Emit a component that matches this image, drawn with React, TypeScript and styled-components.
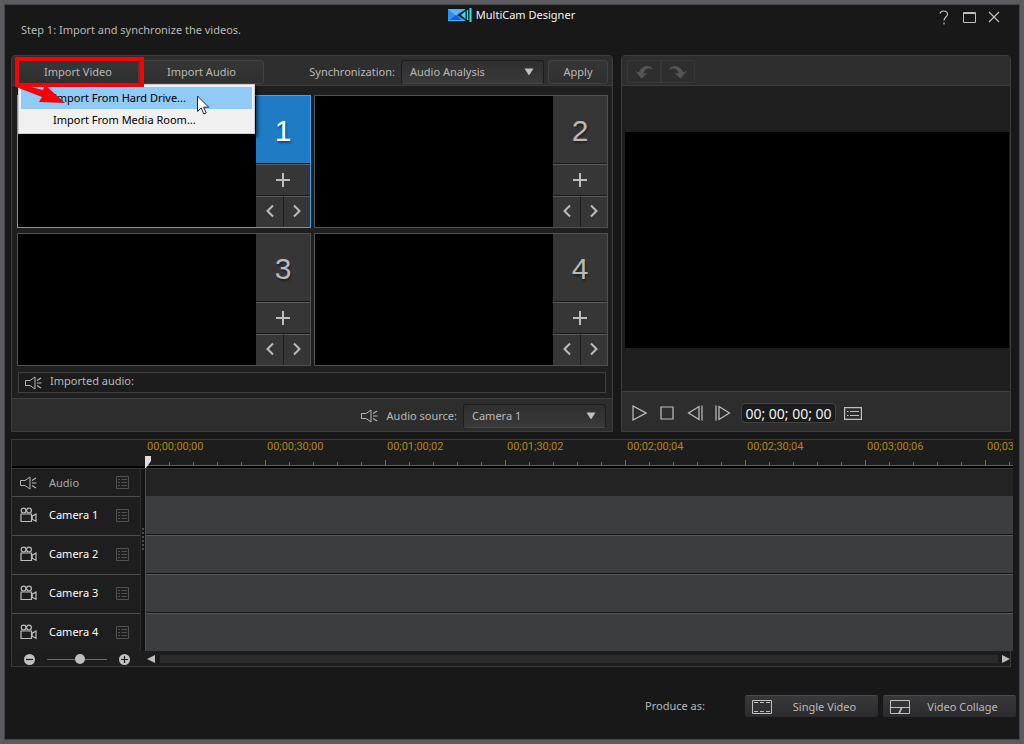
import React from "react";
import styled, { createGlobalStyle, css } from "styled-components";

const GlobalStyle = createGlobalStyle`
  *, *::before, *::after { box-sizing: border-box; }
  body { margin: 0; background: #5c5b60; }
  body, button, select, input {
    font-family: "Noto Sans", "Open Sans", sans-serif;
    font-size: 11px;
    line-height: 16px;
    color: #b9b9b9;
  }
  button, select, input { margin: 0; padding: 0; border: 0; background: none; }
  svg { display: block; flex: none; }
`;

const Frame = styled.div`
  min-height: 100vh;
  border: 4px solid #5c5b60;
  display: flex;
`;

const Window = styled.main`
  flex: 1;
  min-width: 0;
  border: 1px solid #454546;
  background: #181818;
`;

const Header = styled.header`
  display: grid;
  grid-template-columns: 1fr auto 1fr;
  align-items: start;
  height: 50px;
  padding: 2px 17px 0 16px;
`;

const Step = styled.p`
  margin: 15px 0 0;
`;

const Title = styled.h1`
  display: flex;
  align-items: center;
  gap: 4px;
  margin: 0;
  font-size: 11px;
  font-weight: 400;
  line-height: 16px;
  color: #f4f4f4;
`;

const WindowControls = styled.div`
  display: flex;
  justify-content: flex-end;
  gap: 9px;
  margin-top: 2px;
`;

const IconButton = styled.button<{ $w?: number; $h?: number }>`
  display: flex;
  align-items: center;
  justify-content: center;
  width: ${(p) => p.$w ?? 16}px;
  height: ${(p) => p.$h ?? 16}px;
  color: #bdbdbd;
`;

const Workspace = styled.div`
  display: grid;
  grid-template-columns: 602fr 390fr;
  gap: 8px;
  padding: 0 8px 0 6px;
`;

const Panel = styled.section`
  position: relative;
  display: flex;
  flex-direction: column;
  min-width: 0;
  border: 1px solid #3d3d3d;
  border-radius: 4px 4px 0 0;
  background: #1f1f1f;
`;

const Toolbar = styled.div`
  display: flex;
  align-items: center;
  height: 30px;
  padding: 2px 4px 0 5px;
  border-bottom: 1px solid #3d3d3d;
  border-radius: 3px 3px 0 0;
  background: #2e2e2e;
`;

const Button = styled.button<{ $w: number }>`
  width: ${(p) => p.$w}px;
  height: 24px;
  border: 1px solid #434343;
  border-radius: 3px;
  background: linear-gradient(#363636, #2f2f2f);
`;

const ToolLabel = styled.label`
  margin-left: auto;
  margin-right: 6px;
`;

const SelectBox = styled.div<{ $gap?: number }>`
  position: relative;
  width: 143px;
  margin-right: ${(p) => p.$gap ?? 0}px;

  select {
    display: block;
    appearance: none;
    width: 100%;
    height: 24px;
    padding: 0 24px 0 8px;
    border: 1px solid #1b1b1b;
    border-bottom-color: #474747;
    border-radius: 3px;
    background: linear-gradient(#2f2f2f, #3a3a3a);
  }

  svg {
    position: absolute;
    right: 10px;
    top: 8px;
    pointer-events: none;
  }
`;

const CameraGrid = styled.div`
  display: grid;
  grid-template-columns: 1fr 1fr;
  gap: 5px 3px;
  padding: 9px 4px 0 5px;
`;

const Camera = styled.article<{ $active: boolean }>`
  display: flex;
  height: 133px;
  border: 1px solid ${(p) => (p.$active ? "#3fa3f2" : "#515151")};
  background: #000;
`;

const CameraSide = styled.div`
  display: grid;
  grid-template: 68px 32px 31px / 28px 26px;
  width: 54px;
  margin-left: auto;
  background: #363636;
`;

const CameraNumber = styled.div<{ $active: boolean }>`
  grid-column: 1 / -1;
  display: flex;
  align-items: center;
  justify-content: center;
  padding-top: 1px;
  font-family: "Liberation Sans", sans-serif;
  font-size: 30px;
  line-height: 32px;
  text-shadow: 1px 2px 2px rgba(0, 0, 0, 0.4);
  color: ${(p) => (p.$active ? "#fff" : "#b9b9b9")};
  background: ${(p) => (p.$active ? "#1f7bc4" : "transparent")};
`;

const CameraButton = styled.button<{ $wide?: boolean; $split?: boolean }>`
  display: flex;
  align-items: center;
  justify-content: center;
  padding-bottom: 2px;
  border-top: 1px solid #5a5a5a;
  box-shadow: 0 -1px 0 #181818;
  color: #bdbdbd;
  ${(p) => p.$wide && css`grid-column: 1 / -1;`}
  ${(p) => p.$split && css`border-right: 1px solid #1d1d1d;`}
`;

const ImportedAudio = styled.div`
  display: flex;
  align-items: center;
  gap: 8px;
  height: 21px;
  margin: 6px 6px 5px;
  padding: 0 6px;
  border: 1px solid #3f3f3f;
  background: #1c1c1c;

  span { margin-top: -3px; }
`;

const SourceBar = styled.div`
  display: flex;
  align-items: center;
  justify-content: flex-end;
  height: 33px;
  padding: 1px 6px 0 0;
  border-top: 1px solid #404040;
  background: #2d2d2d;

  label { margin: 0 6px 0 9px; }
`;

const Menu = styled.div`
  position: absolute;
  z-index: 2;
  left: 6px;
  top: 28px;
  width: 237px;
  padding: 2px;
  border: 1px solid #cccccc;
  background: #f0f0f0;
  box-shadow: 3px 3px 3px rgba(0, 0, 0, 0.5);
`;

const MenuItem = styled.button<{ $active?: boolean }>`
  display: block;
  width: 100%;
  height: 22px;
  padding-left: 32px;
  text-align: left;
  color: #000;
  background: ${(p) => (p.$active ? "#91c9f7" : "transparent")};
`;

const Highlight = styled.div`
  position: absolute;
  z-index: 3;
  left: 3px;
  top: 1px;
  width: 129px;
  height: 30px;
  border: 4px solid #fb0007;
  pointer-events: none;
`;

const Overlay = styled.svg<{ $x: number; $y: number }>`
  position: absolute;
  z-index: 4;
  left: ${(p) => p.$x}px;
  top: ${(p) => p.$y}px;
  pointer-events: none;
`;

const HistoryButton = styled.button`
  display: flex;
  align-items: center;
  justify-content: center;
  width: 34px;
  height: 23px;
  border: 1px solid #373737;
  color: #555;
`;

const Stage = styled.div`
  flex: 1;
  display: flex;
  align-items: center;
  padding: 3px 1px 0 3px;
`;

const Preview = styled.div`
  width: 100%;
  aspect-ratio: 16 / 9;
  background: #000;
`;

const Transport = styled.div`
  display: flex;
  align-items: center;
  gap: 8px;
  height: 40px;
  padding: 3px 7px 0;
  border-top: 1px solid #404040;
  background: #2d2d2d;
`;

const Timecode = styled.input`
  width: 95px;
  height: 20px;
  border: 1px solid #444;
  border-radius: 4px;
  background: #1b1b1b;
  font-size: 14px;
  text-align: center;
  color: #f2f2f2;
`;

const Timeline = styled.section`
  margin: 7px 6px 0;
  border-top: 1px solid #3a3a3a;
  border-left: 1px solid #3a3a3a;
`;

const Ruler = styled.div`
  position: relative;
  display: flex;
  height: 29px;
  padding-left: 133px;
  border-bottom: 1px solid #383838;
  background: linear-gradient(#1d1d1d 0 26px, #000 26px);
`;

const Scale = styled.div`
  display: flex;
  flex: 1;
  min-width: 0;
  height: 26px;
  overflow: hidden;
  border-bottom: 1px solid #7d6224;
  background:
    linear-gradient(90deg, #8a6c26 1px, transparent 1px) 0 100% / 120px 5px repeat-x,
    linear-gradient(90deg, #8a6c26 1px, transparent 1px) 0 100% / 24px 3px repeat-x;
`;

const Mark = styled.span`
  flex: none;
  width: 120px;
  padding-left: 2px;
  margin-top: -1px;
  font-family: Roboto, sans-serif;
  font-size: 11px;
  font-weight: 400;
  color: #b28611;
`;

const Tracks = styled.div`
  display: flex;
`;

const TrackHeads = styled.div`
  width: 129px;
  border-right: 1px solid #2f2f2f;
`;

const TrackHead = styled.div<{ $audio?: boolean }>`
  display: flex;
  align-items: center;
  height: ${(p) => (p.$audio ? 28 : 39)}px;
  padding: ${(p) => (p.$audio ? 0 : "0 0 2px")};
  padding-left: 8px;
  padding-right: 11px;
  border-bottom: 1px solid #4c4c4c;
  background: #1e1e1e;
  color: ${(p) => (p.$audio ? "#aaa" : "#fff")};

  span { flex: 1; margin: 0 0 0 12px; }
  &:last-child { height: 37px; padding-bottom: 0; border-bottom-color: #1e1e1e; }
`;

const Splitter = styled.div`
  display: flex;
  align-items: center;
  justify-content: center;
  width: 4px;
  padding-bottom: 40px;
  background: #141414;
`;

const Lanes = styled.div`
  flex: 1;
  min-width: 0;
  border-left: 1px solid #d01616;
`;

const Lane = styled.div<{ $audio?: boolean }>`
  height: ${(p) => (p.$audio ? 28 : 39)}px;
  background: ${(p) => (p.$audio ? "#232323" : "#3c3d3e")};
  border-bottom: 1px solid ${(p) => (p.$audio ? "#3c3d3e" : "#59595a")};
  box-shadow: ${(p) => (p.$audio ? "none" : "inset 0 -1px 0 #161616")};

  &:last-child { height: 37px; border-bottom: 0; box-shadow: none; }
`;

const TimelineFoot = styled.div`
  display: flex;
  align-items: center;
  height: 16px;
  margin-right: 2px;
  border-right: 1px solid #3a3a3a;
  border-bottom: 1px solid #3a3a3a;
  background: #1d1d1d;
`;

const Zoom = styled.div`
  display: flex;
  align-items: center;
  justify-content: space-between;
  width: 134px;
  padding: 1px 16px 0 12px;

  input {
    appearance: none;
    width: 60px;
    height: 11px;
    background: linear-gradient(#6a6a6a, #6a6a6a) 0 5px / 100% 1px no-repeat;
  }
  input::-webkit-slider-thumb {
    appearance: none;
    width: 10px;
    height: 10px;
    border-radius: 50%;
    background: #bfbfbf;
  }
`;

const ScrollTrack = styled.div`
  flex: 1;
  height: 8px;
  margin: 0 4px;
  background: #2b2b2b;
`;

const Footer = styled.footer`
  display: flex;
  align-items: center;
  justify-content: flex-end;
  gap: 5px;
  padding: 28px 3px 22px;
`;

const ProduceLabel = styled.span`
  margin-right: 35px;
`;

const ProduceButton = styled.button`
  display: flex;
  align-items: center;
  width: 133px;
  height: 22px;
  padding: 0 7px;
  border-top: 1px solid #4a4a4c;
  border-radius: 2px;
  background: linear-gradient(#38383a, #2b2b2d);

  span { flex: 1; padding-left: 6px; text-align: center; }
`;

const Logo = () => (
  <svg width="24" height="14" viewBox="0 0 24 14" aria-hidden="true">
    <rect x="0" y="1" width="17" height="12" fill="#2f8df6" />
    <path d="M0 1h17L8 8z" fill="#58b8fb" />
    <path d="M0 13l8-6 6 6z" fill="#1359ee" />
    <path d="M0 1.500h17M0 12.500h17" stroke="#22c4fa" />
    <path d="M17 2v10L9 7z" fill="#101b2b" />
    <path d="M17.500 3v8L13 7z" fill="#2be3f4" />
    <path d="M19.500 2v10" stroke="#25d3f4" strokeWidth="1.500" />
    <path d="M22.500 0v14" stroke="#2cebe9" strokeWidth="2" />
  </svg>
);

const Caret = () => (
  <svg width="10" height="8" viewBox="0 0 10 8" aria-hidden="true">
    <path d="M.5.500h9L5 7.500z" fill="#c2c2c2" />
  </svg>
);

const Speaker = () => (
  <svg width="17" height="14" viewBox="0 0 17 14" fill="none" stroke="#b5b5b5" aria-hidden="true">
    <path d="M.5 4.500h4.500l5-3.500v12L5 9.500H.5z" />
    <path d="M12 4.500l4-2.500M12 7h4.500M12 9.500l4 2.500" strokeWidth="1.200" />
  </svg>
);

const CameraIcon = () => (
  <svg width="17" height="16" viewBox="0 0 17 16" fill="none" stroke="#bdbdbd" strokeWidth="1.200" aria-hidden="true">
    <circle cx="3.600" cy="3.600" r="2.400" />
    <circle cx="9" cy="3.600" r="2.400" />
    <path d="M1 7h10.500v7.500H1zM16 7v7.200l-3.800-2V9.200z" />
  </svg>
);

const TrackList = () => (
  <svg width="13" height="13" viewBox="0 0 13 13" fill="none" stroke="#515151" aria-hidden="true">
    <path d="M.5.500h12v12H.5z" />
    <path d="M2 3.500h2M2 6.500h2M2 9.500h2M5.500 3.500H11M5.500 6.500H11M5.500 9.500H11" />
  </svg>
);

const Chevron = ({ flip }: { flip?: boolean }) => (
  <svg width="8" height="14" viewBox="0 0 8 14" fill="none" stroke="currentColor" strokeWidth="2" aria-hidden="true">
    <path d={flip ? "M1 1.500L6.500 7 1 12.500" : "M7 1.500L1.500 7 7 12.500"} />
  </svg>
);

const HistoryArrow = ({ flip }: { flip?: boolean }) => (
  <svg width="18" height="14" viewBox="0 0 18 14" fill="currentColor" aria-hidden="true">
    <path
      transform={flip ? "translate(18 0) scale(-1 1)" : undefined}
      d="M0 6l4 1.200C5.500 3.500 8.500 1 12.500 1c2.500 0 4.500 1.200 5.500 4-1.500-1.300-3.200-1.800-5-1.500C10.300 4 9 6 8.500 8.500L12.500 8l-6 5.500z"
    />
  </svg>
);

const Stroke = ({ w, h, d }: { w: number; h: number; d: string }) => (
  <svg width={w} height={h} viewBox={`0 0 ${w} ${h}`} fill="none" stroke="#c0c0c0" strokeWidth="1.200" aria-hidden="true">
    <path d={d} />
  </svg>
);

const ZoomGlyph = ({ plus }: { plus?: boolean }) => (
  <svg width="11" height="11" viewBox="0 0 11 11" aria-hidden="true">
    <circle cx="5.500" cy="5.500" r="5.500" fill="#bfbfbf" />
    <path d={plus ? "M2 5.500h7M5.500 2v7" : "M2 5.500h7"} stroke="#1d1d1d" strokeWidth="1.200" />
  </svg>
);

const marks = [
  "00;00;00;00", "00;00;30;00", "00;01;00;02", "00;01;30;02",
  "00;02;00;04", "00;02;30;04", "00;03;00;06", "00;03;30;06",
];
const cameras = [1, 2, 3, 4];

function CameraCell({ n }: { n: number }) {
  const active = n === 1;
  return (
    <Camera $active={active}>
      <CameraSide>
        <CameraNumber $active={active}>{n}</CameraNumber>
        <CameraButton $wide aria-label={`Add clip to camera ${n}`}>
          <svg width="14" height="14" viewBox="0 0 14 14" stroke="currentColor" strokeWidth="2" aria-hidden="true">
            <path d="M0 7h14M7 0v14" />
          </svg>
        </CameraButton>
        <CameraButton $split aria-label="Previous clip"><Chevron /></CameraButton>
        <CameraButton aria-label="Next clip"><Chevron flip /></CameraButton>
      </CameraSide>
    </Camera>
  );
}

export default function App() {
  return (
    <Frame>
      <GlobalStyle />
      <Window>
        <Header>
          <Step>Step 1: Import and synchronize the videos.</Step>
          <Title><Logo />MultiCam Designer</Title>
          <WindowControls>
            <IconButton aria-label="Help">
              <Stroke w={10} h={15} d="M1 3.500C1.500 1.500 3 1 4.500 1 7 1 8.500 2.300 8.500 4.200 8.500 7 5 7 5 10.500M5 12.500v2" />
            </IconButton>
            <IconButton aria-label="Maximize">
              <svg width="13" height="11" viewBox="0 0 13 11" fill="none" stroke="currentColor" aria-hidden="true">
                <path d="M.5.500h12v10H.5zM0 1.500h13" />
              </svg>
            </IconButton>
            <IconButton aria-label="Close">
              <Stroke w={12} h={12} d="M1 1l10 10M11 1L1 11" />
            </IconButton>
          </WindowControls>
        </Header>

        <Workspace>
          <Panel>
            <Toolbar>
              <Button $w={122}>Import Video</Button>
              <Button $w={125}>Import Audio</Button>
              <ToolLabel htmlFor="sync">Synchronization:</ToolLabel>
              <SelectBox $gap={4}>
                <select id="sync"><option>Audio Analysis</option></select>
                <Caret />
              </SelectBox>
              <Button $w={60}>Apply</Button>
            </Toolbar>
            <Menu>
              <MenuItem $active>Import From Hard Drive...</MenuItem>
              <MenuItem>Import From Media Room...</MenuItem>
            </Menu>
            <Highlight />
            <Overlay $x={4} $y={28} width="50" height="24" viewBox="0 0 50 24" aria-hidden="true">
              <path d="M3 0l24 6 2-5 20 18-26-1 3-5L0 3z" fill="#fb0007" />
            </Overlay>
            <Overlay $x={185} $y={39} width="13" height="20" viewBox="0 0 13 20" aria-hidden="true">
              <path d="M.5 1v15.500l3.700-3.500 2.600 6 2.400-1-2.600-5.800h5.100z" fill="#fff" stroke="#1c2a3c" />
            </Overlay>
            <CameraGrid>
              {cameras.map((n) => <CameraCell key={n} n={n} />)}
            </CameraGrid>
            <ImportedAudio><Speaker /><span>Imported audio:</span></ImportedAudio>
            <SourceBar>
              <Speaker />
              <label htmlFor="source">Audio source:</label>
              <SelectBox>
                <select id="source"><option>Camera 1</option></select>
                <Caret />
              </SelectBox>
            </SourceBar>
          </Panel>

          <Panel>
            <Toolbar>
              <HistoryButton aria-label="Undo"><HistoryArrow /></HistoryButton>
              <HistoryButton aria-label="Redo"><HistoryArrow flip /></HistoryButton>
            </Toolbar>
            <Stage><Preview /></Stage>
            <Transport>
              <IconButton $w={20} aria-label="Play"><Stroke w={15} h={16} d="M1 1v14l13-7z" /></IconButton>
              <IconButton $w={20} aria-label="Stop"><Stroke w={14} h={14} d="M1 1h12v12H1z" /></IconButton>
              <IconButton $w={20} aria-label="Previous frame"><Stroke w={16} h={16} d="M12 1.500v13L1.500 8zM15 .500v15" /></IconButton>
              <IconButton $w={20} aria-label="Next frame"><Stroke w={16} h={16} d="M4 1.500v13L14.500 8zM1 .500v15" /></IconButton>
              <Timecode aria-label="Timecode" readOnly value="00; 00; 00; 00" />
              <IconButton $w={18} aria-label="Preview options">
                <Stroke w={18} h={13} d="M.6.600h16.800v11.800H.6zM3 4.500h1.500M3 8.500h1.500M6 4.500h9M6 8.500h9" />
              </IconButton>
            </Transport>
          </Panel>
        </Workspace>

        <Timeline>
          <Ruler>
            <Scale>{marks.map((m) => <Mark key={m}>{m}</Mark>)}</Scale>
            <Overlay $x={133} $y={16} width="6" height="13" viewBox="0 0 6 13" aria-hidden="true">
              <path d="M0 0h6v5L1 12H0z" fill="#dedede" />
            </Overlay>
          </Ruler>
          <Tracks>
            <TrackHeads>
              <TrackHead $audio><Speaker /><span>Audio</span><TrackList /></TrackHead>
              {cameras.map((n) => (
                <TrackHead key={n}><CameraIcon /><span>Camera {n}</span><TrackList /></TrackHead>
              ))}
            </TrackHeads>
            <Splitter>
              <svg width="2" height="24" viewBox="0 0 2 24" aria-hidden="true">
                <path d="M1 0v24" stroke="#4a4a4a" strokeWidth="2" strokeDasharray="2 2" />
              </svg>
            </Splitter>
            <Lanes>
              <Lane $audio />
              {cameras.map((n) => <Lane key={n} />)}
            </Lanes>
          </Tracks>
          <TimelineFoot>
            <Zoom>
              <IconButton $w={11} $h={11} aria-label="Zoom out"><ZoomGlyph /></IconButton>
              <input type="range" aria-label="Timeline zoom" min={0} max={100} defaultValue={56} />
              <IconButton $w={11} $h={11} aria-label="Zoom in"><ZoomGlyph plus /></IconButton>
            </Zoom>
            <IconButton $w={10} $h={12} aria-label="Scroll left">
              <svg width="8" height="8" viewBox="0 0 8 8" fill="currentColor" aria-hidden="true"><path d="M8 0v8L0 4z" /></svg>
            </IconButton>
            <ScrollTrack />
            <IconButton $w={8} $h={12} aria-label="Scroll right">
              <svg width="8" height="8" viewBox="0 0 8 8" fill="currentColor" aria-hidden="true"><path d="M0 0v8l8-4z" /></svg>
            </IconButton>
          </TimelineFoot>
        </Timeline>

        <Footer>
          <ProduceLabel>Produce as:</ProduceLabel>
          <ProduceButton>
            <svg width="20" height="14" viewBox="0 0 20 14" fill="none" stroke="#c0c0c0" aria-hidden="true">
              <path d="M.5.500h19v13H.5z" />
              <path d="M2 2.500h16M2 11.500h16" strokeDasharray="4 2" />
            </svg>
            <span>Single Video</span>
          </ProduceButton>
          <ProduceButton>
            <svg width="20" height="14" viewBox="0 0 20 14" fill="none" stroke="#c0c0c0" aria-hidden="true">
              <path d="M.5.500h19v13H.5zM0 7.500h20" />
              <path d="M11.500 8L9 13.500" strokeWidth="1.800" />
            </svg>
            <span>Video Collage</span>
          </ProduceButton>
        </Footer>
      </Window>
    </Frame>
  );
}
